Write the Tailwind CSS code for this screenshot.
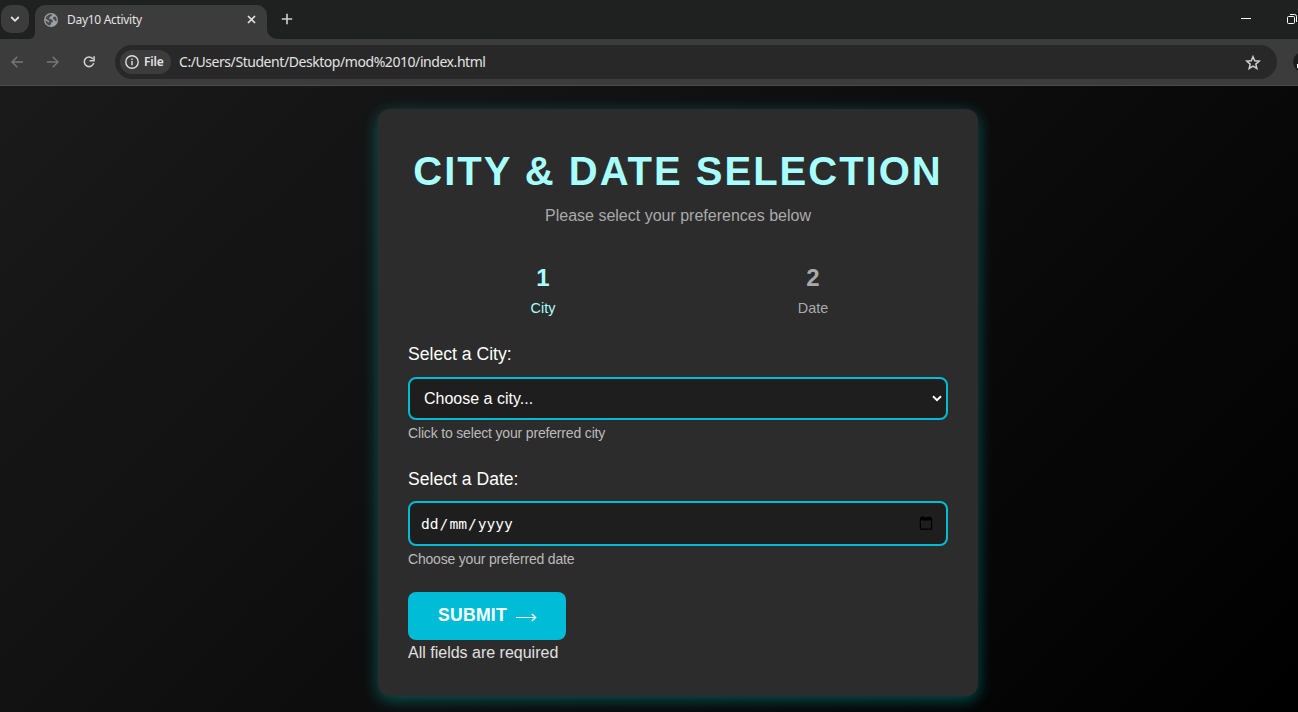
<!DOCTYPE html>
<html lang="en">
<head>
<meta charset="utf-8">
<title>Day10 Activity</title>
<script src="https://cdn.jsdelivr.net/npm/@tailwindcss/browser@4"></script>
</head>
<body class="w-[1298px] h-[712px] overflow-hidden flex flex-col bg-black font-['Liberation_Sans',Arial,sans-serif]">
  <!-- Tab strip -->
  <header class="h-[39px] shrink-0 bg-[#1f2120] flex items-start font-['Noto_Sans',sans-serif]">
    <button class="mt-[5px] ml-px w-7 h-7 rounded-[10px] bg-[#3c3c3c] flex items-center justify-center">
      <svg width="10" height="8" viewBox="0 0 10 8" fill="none" stroke="#e3e3e3" stroke-width="1.8"><path d="M1.2 2l3.8 3.8L8.8 2"/></svg>
    </button>
    <div class="self-end w-1.5 h-[10px] bg-[#3c3c3c]"><div class="w-1.5 h-[10px] bg-[#1f2120] rounded-br-[10px]"></div></div>
    <div class="mt-[5px] h-[34px] w-[232px] rounded-t-[10px] bg-[#3c3c3c] flex items-center pl-[9px] pr-[11px] pb-[5px]">
      <svg width="14" height="14" viewBox="0 0 14 14"><circle cx="7" cy="7" r="7" fill="#9aa0a6"/><path d="M8.300 1.500Q8.300 3.300 6.300 3.400Q5.900 4.600 4.900 4.900Q5.200 6.300 7 6.300Q8.900 6.300 8.900 8.200Q8.800 9.300 7.200 9.600Q7.300 11.400 6 12.600Q1.400 11.600 1.400 7.200L4.600 9.200Q5.800 9 5.200 8L1.600 5.800Q1.700 6.500 1.500 7Q1.300 9.500 3 11Q5 12.800 6 12.600Q7.300 11.400 7.200 9.600Q8.800 9.300 8.900 8.200Q8.900 6.300 7 6.300Q5.200 6.300 4.900 4.900Q5.900 4.600 6.300 3.400Q8.300 3.300 8.300 1.500z" fill="none"/><path d="M8.300 1.500Q8.300 3.300 6.300 3.400Q5.900 4.600 4.900 4.900Q5.200 6.300 7 6.300Q8.900 6.300 8.900 8.200Q8.800 9.300 7.200 9.600Q7.300 11.400 6 12.600Q1.400 11.600 1.400 7.200L4.600 9.200Q5.800 9 5.200 8L1.600 5.800Q2.800 1.400 7 1.300zM9.400 3.800L11.600 3.700Q12.800 5.300 12.700 7.600Q12.300 8.700 11.300 8.100Q10.900 6.500 9.500 6.200Q8.300 5 9.400 3.800z" fill="#3c3c3c" fill-opacity=".85"/></svg>
      <span class="ml-[9px] text-[12px] leading-4 tracking-[-0.3px] text-[#e3e3e3] whitespace-nowrap">Day10 Activity</span>
      <svg class="ml-auto" width="9" height="9" viewBox="0 0 9 9" stroke="#e3e3e3" stroke-width="1.700"><path d="M1 1l7 7M8 1L1 8"/></svg>
    </div>
    <div class="self-end w-[10px] h-[10px] bg-[#3c3c3c]"><div class="w-[10px] h-[10px] bg-[#1f2120] rounded-bl-[10px]"></div></div>
    <svg class="mt-[13px] ml-[4px]" width="12" height="12" viewBox="0 0 12 12" stroke="#d0d0d0" stroke-width="1.600"><path d="M6 .8v10.400M.8 6h10.400"/></svg>
    <div class="ml-auto flex items-start gap-[36px] mt-[13px]">
      <div class="mt-[5px] w-[10px] h-px bg-white"></div>
      <svg width="11" height="12" viewBox="0 0 11 12" fill="none" stroke="#fff"><rect x=".5" y="3.500" width="7" height="7" rx="1"/><path d="M3 1.500h4.500q2 0 2 2V9"/></svg>
    </div>
  </header>
  <!-- Address bar -->
  <nav class="h-[47px] shrink-0 bg-[#3c3c3c] border-b border-[#4b4b4b] flex items-center pl-[11px] overflow-hidden font-['Noto_Sans',sans-serif]">
    <svg class="shrink-0" width="12" height="12" viewBox="0 0 12 12" fill="none" stroke="#777" stroke-width="1.500"><path d="M12 6H1M6.300.7L1 6l5.300 5.300"/></svg>
    <svg class="ml-6 shrink-0" width="12" height="12" viewBox="0 0 12 12" fill="none" stroke="#777" stroke-width="1.500"><path d="M0 6h11M5.700.7L11 6l-5.300 5.300"/></svg>
    <svg class="ml-6 shrink-0" width="12" height="12" viewBox="0 0 13 13" fill="none" stroke="#d0d0d0" stroke-width="1.700"><path d="M10.800 3.200A5.200 5.200 0 1 0 11.600 7.700"/><path d="M12 .2v4.900H7.100"/></svg>
    <div class="ml-5 w-[1162px] shrink-0 h-[34px] rounded-full bg-[#282828] flex items-center pl-[5px] pr-4">
      <div class="w-[51px] h-6 rounded-full bg-[#3c3c3c] flex items-center pl-[5px]">
        <svg width="14" height="14" viewBox="0 0 14 14" fill="none" stroke="#dedede" stroke-width="1.400"><circle cx="7" cy="7" r="6.200"/><path d="M7 6v4.300M7 3.500v1.400"/></svg>
        <span class="ml-[5px] text-[12px] leading-4 font-semibold tracking-[-0.2px] text-[#e3e3e3]">File</span>
      </div>
      <span class="ml-2 text-[14px] leading-5 tracking-[-0.44px] text-[#e3e3e3] whitespace-nowrap">C:/Users/Student/Desktop/mod%2010/index.html</span>
      <svg class="ml-auto" width="16" height="15" viewBox="0 0 16 15" fill="none" stroke="#d0d0d0" stroke-width="1.500"><path d="M8 1.700l1.750 4.100 4.450.4-3.370 2.940 1 4.360L8 11.200l-3.830 2.300 1-4.360L1.800 6.200l4.450-.4z"/></svg>
    </div>
    <div class="ml-4 w-5 h-5 shrink-0 rounded-full bg-[#1c1c1c] flex items-end pb-1 pl-1"><div class="w-2 h-1 bg-white"></div></div>
  </nav>
  <!-- Page -->
  <main class="h-[626px] shrink-0 bg-[linear-gradient(135deg,#1a1a1a,#000)] pt-[23px] pl-[378px]">
    <section class="w-[600px] h-[587px] rounded-xl bg-[#2c2c2c] px-[30px] pt-[38px] shadow-[0_4px_16px_rgba(0,255,255,0.3)]">
      <h1 class="h-12 text-[40px] leading-[48px] font-bold tracking-[2px] text-center text-[#a8ffff] whitespace-nowrap">CITY &amp; DATE SELECTION</h1>
      <p class="mt-[11px] h-5 text-[16px] leading-5 text-center text-[#aaa]">Please select your preferences below</p>
      <div class="mt-[37px] grid grid-cols-2 text-center">
        <div class="text-[#a8ffff]">
          <div class="text-2xl leading-[30px] font-bold">1</div>
          <div class="mt-[5px] text-[14.4px] leading-5">City</div>
        </div>
        <div class="text-[#aaa]">
          <div class="text-2xl leading-[30px] font-bold">2</div>
          <div class="mt-[5px] text-[14.4px] leading-5">Date</div>
        </div>
      </div>
      <label class="mt-[26px] block text-[17.600px] leading-5 text-white">Select a City:</label>
      <div class="mt-[13px] h-[43px] rounded-lg border-2 border-[#00bcd4] bg-[#1e1e1e] flex items-center pl-[14px] pr-1 text-white">
        <span class="text-base leading-5">Choose a city...</span>
        <svg class="ml-auto" width="10" height="7" viewBox="0 0 10 7" fill="none" stroke="#fff" stroke-width="2"><path d="M1 1.200l4 4 4-4"/></svg>
      </div>
      <p class="mt-[3px] text-[14px] tracking-[-0.17px] leading-5 text-[#bbb]">Click to select your preferred city</p>
      <label class="mt-[26px] block text-[17.600px] leading-5 text-white">Select a Date:</label>
      <div class="mt-3 h-[45px] rounded-lg border-2 border-[#00bcd4] bg-[#1e1e1e] flex items-center pl-[11px] pr-[13px] text-white">
        <span class="flex gap-px text-[14.600px] leading-5 font-['DejaVu_Sans_Mono',monospace]"><span>dd</span><span>/</span><span>mm</span><span>/</span><span>yyyy</span></span>
        <svg class="ml-auto" width="14" height="15" viewBox="0 0 14 15" fill="#000"><path fill-rule="evenodd" d="M2 1.200h.8V0h1.400v1.200h5.600V0h1.400v1.200H12q1.200 0 1.200 1.200v10.200q0 1.200-1.200 1.200H2q-1.200 0-1.200-1.200V2.400Q.8 1.200 2 1.200zM2 4.600v8h10v-8z"/></svg>
      </div>
      <p class="mt-[3px] text-[14px] tracking-[-0.19px] leading-5 text-[#bbb]">Choose your preferred date</p>
      <button class="mt-[23px] w-[158px] h-12 rounded-lg bg-[#00bcd7] flex items-center pl-[30px] pb-[2px] text-white text-[17.600px] tracking-[0.25px] leading-5 font-bold">
        <span>SUBMIT</span>
        <svg class="ml-[9px] mt-1" width="21" height="9" viewBox="0 0 21 9" fill="none" stroke="#fff" stroke-width="1.200"><path d="M0 4.500h20M15.800 1l4 3.500-4 3.500"/></svg>
      </button>
      <p class="mt-[3px] text-[16px] leading-5 text-[#e0e0e0]">All fields are required</p>
    </section>
  </main>
</body>
</html>
